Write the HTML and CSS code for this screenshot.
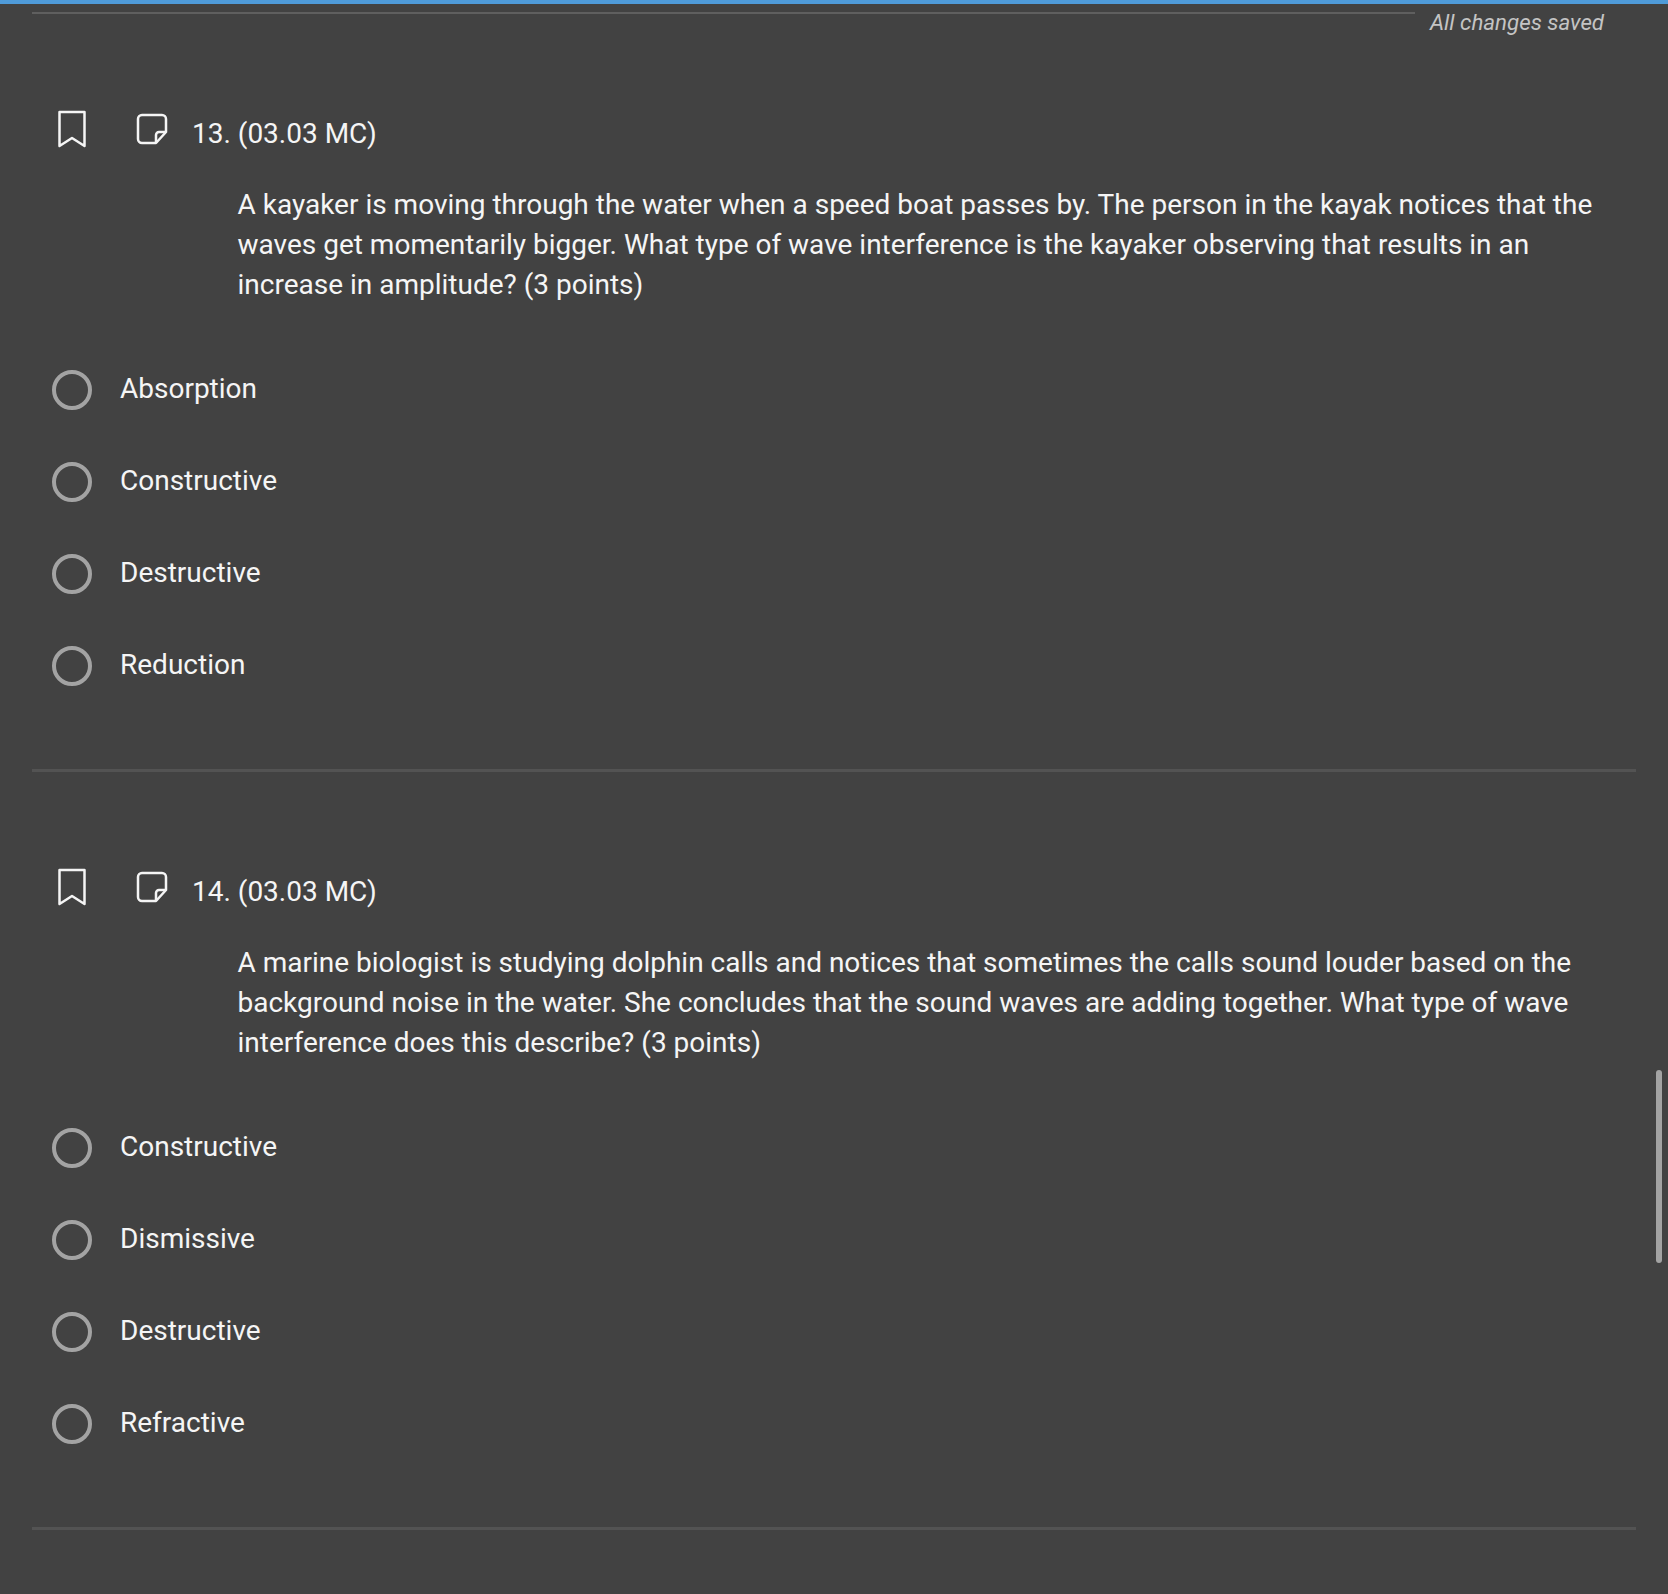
FILE: index.html
```html
<!DOCTYPE html>
<html lang="en">
<head>
    <meta charset="UTF-8">
    <title>Quiz</title>
    <link rel="stylesheet" href="styles.css">
</head>
<body>
    <div class="top-bar"></div>
    <div class="save-row">
        <div class="save-line"></div>
        <div class="save-text">All changes saved</div>
    </div>

    <!-- Question 13 -->
    <section class="question">
        <div class="question-head">
            <svg class="icon-bookmark" width="30" height="38" viewBox="0 0 30 38"><path d="M2.5 2h25v34L15 28 2.5 36z"/></svg>
            <svg class="icon-note" width="32" height="32" viewBox="0 0 32 32"><path d="M6 2h20a4 4 0 0 1 4 4v13L20 30H6a4 4 0 0 1-4-4V6a4 4 0 0 1 4-4z"/><path d="M30 19h-7a3 3 0 0 0-3 3v8"/></svg>
            <span class="question-title">13. (03.03 MC)</span>
        </div>
        <p class="question-text">A kayaker is moving through the water when a speed boat passes by. The person in the kayak notices that the waves get momentarily bigger. What type of wave interference is the kayaker observing that results in an increase in amplitude? (3 points)</p>
        <ul class="options">
            <li class="option"><span class="radio"></span>Absorption</li>
            <li class="option"><span class="radio"></span>Constructive</li>
            <li class="option"><span class="radio"></span>Destructive</li>
            <li class="option"><span class="radio"></span>Reduction</li>
        </ul>
    </section>

    <!-- Question 14 -->
    <section class="question">
        <div class="question-head">
            <svg class="icon-bookmark" width="30" height="38" viewBox="0 0 30 38"><path d="M2.5 2h25v34L15 28 2.5 36z"/></svg>
            <svg class="icon-note" width="32" height="32" viewBox="0 0 32 32"><path d="M6 2h20a4 4 0 0 1 4 4v13L20 30H6a4 4 0 0 1-4-4V6a4 4 0 0 1 4-4z"/><path d="M30 19h-7a3 3 0 0 0-3 3v8"/></svg>
            <span class="question-title">14. (03.03 MC)</span>
        </div>
        <p class="question-text">A marine biologist is studying dolphin calls and notices that sometimes the calls sound louder based on the background noise in the water. She concludes that the sound waves are adding together. What type of wave interference does this describe? (3 points)</p>
        <ul class="options">
            <li class="option"><span class="radio"></span>Constructive</li>
            <li class="option"><span class="radio"></span>Dismissive</li>
            <li class="option"><span class="radio"></span>Destructive</li>
            <li class="option"><span class="radio"></span>Refractive</li>
        </ul>
    </section>

    <div class="scroll-thumb"></div>
</body>
</html>
```

FILE: styles.css
```css
html, body {
    height: 100%;
}

body {
    margin: 0;
    background-color: #424242;
    color: #f5f5f5;
    font-family: Roboto, sans-serif;
    overflow: hidden;
    position: relative;
}

.top-bar {
    height: 4px;
    background-color: #4f9bd9;
}

/* Save status */
.save-row {
    display: flex;
    align-items: flex-start;
    height: 38px;
    padding-left: 32px;
}

.save-line {
    width: 1383px;
    height: 2px;
    margin-top: 8px;
    background-color: #5f5f5f;
}

.save-text {
    margin-left: 15px;
    margin-top: 6px;
    font-size: 22.3px;
    line-height: 24px;
    font-style: italic;
    color: #c4c4c4;
}

/* Questions */
.question {
    margin: 0 32px 28px;
    height: 730px;
    padding-top: 72px;
    box-sizing: border-box;
    border-bottom: 3px solid #535353;
}

.question-head {
    display: flex;
    align-items: center;
    height: 40px;
    padding-left: 25px;
}

.icon-bookmark, .icon-note {
    flex: none;
    fill: none;
    stroke: #f5f5f5;
    stroke-width: 2.5;
    stroke-linejoin: round;
}

.icon-bookmark {
    margin-top: -11px;
}

.icon-note {
    margin-left: 49px;
    margin-top: -11px;
}

.question-title {
    margin-left: 24px;
    font-size: 28px;
    line-height: 40px;
}

.question-text {
    margin: 31px 0 0 205.5px;
    max-width: 1380px;
    font-size: 28px;
    line-height: 40px;
}

.options {
    list-style: none;
    margin: 38px 0 0;
    padding: 0;
}

.option {
    display: flex;
    align-items: center;
    box-sizing: border-box;
    height: 92px;
    padding: 0 0 2px 20px;
    font-size: 28px;
}

.radio {
    width: 40px;
    height: 40px;
    box-sizing: border-box;
    border: 4px solid #a3a3a3;
    border-radius: 50%;
    margin-right: 28px;
    margin-top: 4px;
    flex: none;
}

.scroll-thumb {
    position: absolute;
    left: 1656px;
    top: 1070px;
    width: 6px;
    height: 193px;
    border-radius: 3px;
    background-color: #a3a3a3;
}
```
